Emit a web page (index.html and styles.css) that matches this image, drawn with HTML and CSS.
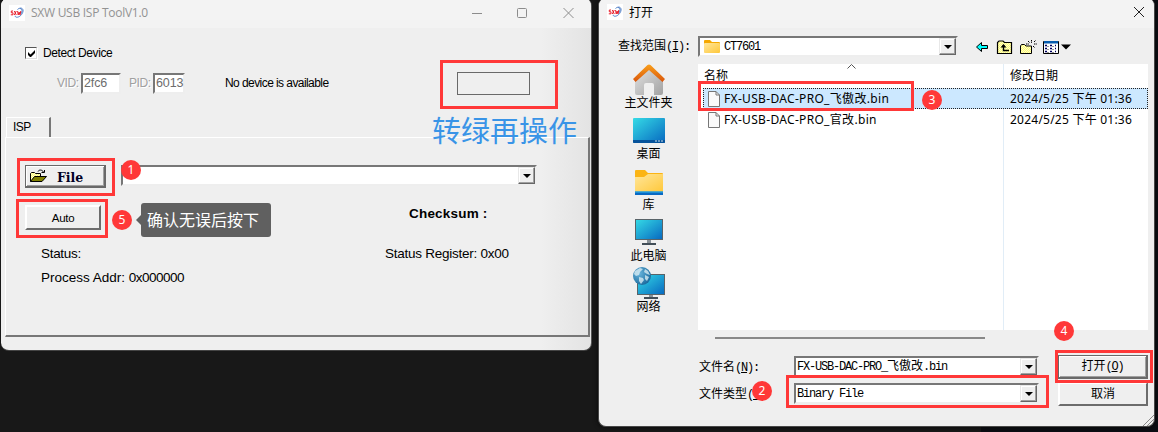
FILE: index.html
```html
<!DOCTYPE html>
<html lang="zh-CN">
<head>
<meta charset="utf-8">
<title>SXW USB ISP Tool</title>
<link rel="stylesheet" href="styles.css">
</head>
<body>
<svg class="defs" width="0" height="0">
  <defs>
    <pattern id="dither" width="2" height="2" patternUnits="userSpaceOnUse"><rect width="2" height="2" fill="#ffff70"/><path d="M0 0h1v1H0zM1 1h1v1H1z" fill="#fffbd0"/></pattern>
    <linearGradient id="screen" x1="0" y1="0" x2="1" y2="1"><stop offset="0" stop-color="#35dbe6"/><stop offset="1" stop-color="#0768c0"/></linearGradient>
    <linearGradient id="gold" x1="0" y1="0" x2="1" y2="1"><stop offset="0" stop-color="#ffe69b"/><stop offset="1" stop-color="#ffc83a"/></linearGradient>
    <linearGradient id="roof" x1="0" y1="0" x2="0" y2="1"><stop offset="0" stop-color="#f9a01b"/><stop offset="1" stop-color="#d9550b"/></linearGradient>
    <linearGradient id="wall" x1="0" y1="0" x2="1" y2="1"><stop offset="0" stop-color="#e2e2e2"/><stop offset="1" stop-color="#a2a2a2"/></linearGradient>
    <radialGradient id="globe" cx=".35" cy=".35" r=".7"><stop offset="0" stop-color="#69b5dc"/><stop offset="1" stop-color="#1b6a9d"/></radialGradient>
    <symbol id="logo" viewBox="0 0 16 16"><rect width="16" height="16" fill="#fff"/><path d="M8.500 4.500C10.500 2.600 13.500 2.500 14 5c.5 3-2.500 6.700-5.500 7.200-1.500.3-2.500-.4-2.200-1.400M11 3.500c2.500.5 2.500 3 .8 5.500" fill="none" stroke="#3c70c0" stroke-width=".9"/><path d="M4 6H2.300v1.800h1.700v2H1.800M5.300 6l2 4M7.300 6l-2 4M8.600 6l.6 4 .9-3 .9 3L11.800 6" fill="none" stroke="#e8202c"/></symbol>
    <symbol id="page" viewBox="0 0 12 16"><path d="M.5.500h7.500l3.500 3.500v11.500H.5z" fill="#fafafa" stroke="#777"/><path d="M8 .5V4h3.500" fill="none" stroke="#777"/></symbol>
  </defs>
</svg>
<main class="desktop">
  <section class="window tool">
    <header class="titlebar">
      <svg class="logo"><use href="#logo"/></svg>
      <span class="tool-title">SXW USB ISP ToolV1.0</span>
      <svg class="win-controls" width="102" height="12" viewBox="0 0 102 12" fill="none" stroke="#8c8c8c"><path d="M0 6.500h10"/><rect x="45.500" y="1.500" width="9" height="9" rx="1"/><path d="m91.500 1 10 10m0-10-10 10"/></svg>
    </header>
    <div class="detect"><span class="check"><svg width="9" height="9" viewBox="0 0 9 9"><path d="M1 3v3l2 2h1l4-4V1L3.500 5.500z"/></svg></span><span class="t-detect">Detect Device</span></div>
    <div class="device">
      <span class="dim t-vid">VID:</span><span class="sunken vid">2fc6</span><span class="dim t-pid">PID:</span><span class="sunken pid">6013</span>
      <span class="t-none">No device is available</span><span class="lamp"></span>
    </div>
    <div class="tabs"><span class="tab">ISP</span></div>
    <div class="panel">
      <div class="file-row">
        <div class="button default file-btn"><svg width="17" height="14" viewBox="0 0 17 14"><path d="M.5 12.500v-8l1-1h3l1 1h5v3" fill="url(#dither)" stroke="#000"/><path d="m.5 12.500 4-5h12l-4.500 5z" fill="#808000" stroke="#000"/><path d="M8 2.500c1-2 4-2 5.500.5m-2 .5h3V1" fill="none" stroke="#000"/></svg><b>File</b></div>
        <div class="combo path"><i class="drop"></i></div>
      </div>
      <div class="auto-row"><div class="button auto">Auto</div><b class="t-check">Checksum :</b></div>
      <div class="status-row"><span class="t-status">Status:</span><span class="t-reg">Status Register: 0x00</span></div>
      <div class="addr-row"><span class="t-addr">Process Addr: <span class="hex">0x000000</span></span></div>
    </div>
  </section>

  <section class="window dialog">
    <header class="titlebar">
      <svg class="logo"><use href="#logo"/></svg><span class="dlg-title">打开</span>
      <svg class="dlg-close" width="12" height="12" viewBox="0 0 12 12"><path d="m1 1 10 10m0-10L1 11" stroke="#222" fill="none"/></svg>
    </header>
    <div class="lookin">
      <span class="lookin-label">查找范围<span class="mono">(<u>I</u>):</span></span>
      <div class="combo folder-combo"><svg width="16" height="13" viewBox="0 0 16 13"><path d="M0 1q0-1 1-1h5l2 2h7q1 0 1 1v3H0z" fill="#f5a800"/><rect y="3" width="16" height="10" rx="1" fill="url(#gold)"/></svg><span class="mono">CT7601</span><i class="drop"></i></div>
      <svg class="tools" width="96" height="18" viewBox="0 0 96 18">
        <path d="m.5 9 5-4.500v3h6v3h-6v3z" fill="#0ff" stroke="#000"/>
        <path d="M21.500 15.500v-11l1.500-1.500h4l1.500 1.500h7v11z" fill="url(#dither)" stroke="#000" stroke-width="1.200"/><path d="M27.500 7v5.500H33" stroke="#000" fill="none" stroke-width="1.400"/><path d="m24.500 9.500 3-3.500 3 3.500z"/>
        <path d="M44.500 15.500V8l1-1.500h3L50 8h5.500v7.500z" fill="url(#dither)" stroke="#000"/><path d="M55.500 2v3m0 3v3M50 6h3m5 0h3m-9-3 2 2m3 3 2 2m-1-6 2-2" stroke="#000" stroke-dasharray="1.500 .7" fill="none"/>
        <path d="M67.500 3.500h15v12h-15z" fill="#fff" stroke="#000"/><path d="M68 3h14v2.500H68z" fill="#075cae"/><path d="M69 7.500h2m3 0h2m3 0h1m-11 3h2m3 0h2m3 0h1m-11 3h2m3 0h2m3 0h1" stroke="#000060" stroke-width="1.500"/><path d="M71 8.500h2m3 0h2m-7 3h2m3 0h2m-7 3h2m3 0h2" stroke="#999"/>
        <path d="M85 6.500h10l-5 5z"/>
      </svg>
    </div>
    <div class="dialog-body">
      <nav class="places">
        <div class="place p1"><svg width="32" height="31" viewBox="0 0 32 31"><path d="M2 16 16 4l14 12v13q0 2-2 2h-7V21q0-2-2-2h-6q-2 0-2 2v10H4q-2 0-2-2z" fill="url(#wall)"/><path d="M0 15 14.500 1q1.500-1.200 3 0L32 15l-2.500 3L16 6 2.500 18z" fill="url(#roof)"/></svg><span>主文件夹</span></div>
        <div class="place p2"><svg width="32" height="25" viewBox="0 0 32 25"><rect width="32" height="25" rx="1" fill="url(#screen)"/><path d="M0 22h32v2q0 1-1 1H1q-1 0-1-1z" fill="#07539b"/><path d="M22 23h2m1 0h2m1 0h2" stroke="#cce2ed"/></svg><span>桌面</span></div>
        <div class="place p3"><svg width="28" height="25" viewBox="0 0 28 25"><path d="M0 1q0-1 1-1h9l3 3h14q1 0 1 1v6H0z" fill="#fbb414"/><path d="M0 7h9l4-3h15v18H0z" fill="url(#gold)"/><path d="M0 21.500h28V25H0z" fill="#0869c3"/><path d="M0 22h28" stroke="#31b7ee"/></svg><span>库</span></div>
        <div class="place p4"><svg width="28" height="26" viewBox="0 0 28 26"><path d="M12 20h4v5h-4z" fill="#8a9298"/><path d="M7 24h14v2H7z" fill="#414d57"/><rect x=".5" y=".5" width="27" height="20" fill="url(#screen)" stroke="#596368"/></svg><span>此电脑</span></div>
        <div class="place p5"><svg width="32" height="32" viewBox="0 0 32 32"><path d="M16 27h4v4h-4z" fill="#8a9298"/><path d="M11 30h14v2H11z" fill="#414d57"/><rect x="4.500" y="7.500" width="27" height="20" fill="url(#screen)" stroke="#596368"/><circle cx="9" cy="9" r="9" fill="url(#globe)"/><path d="m2 4 5-3 3 1-3 3-1 3-3 1-2-2zM12 2l3 2 2 4-3-1-3-2zM6 10l4 1 1 2-3 4-2-3zM12 8l4 2-2 4-2-2z" fill="#d7ebf2" opacity=".8"/></svg><span>网络</span></div>
      </nav>
      <div class="files">
        <div class="list-head"><span>名称</span><svg width="9" height="5" viewBox="0 0 9 5"><path d="m.5 4.500 4-4 4 4" fill="none" stroke="#555"/></svg><span class="date-head">修改日期</span></div>
        <div class="entry selected"><svg class="page"><use href="#page"/></svg><span class="name">FX-USB-DAC-PRO_飞傲改.bin</span><span class="date">2024/5/25 下午 01:36</span></div>
        <div class="entry"><svg class="page"><use href="#page"/></svg><span class="name">FX-USB-DAC-PRO_官改.bin</span><span class="date">2024/5/25 下午 01:36</span></div>
        <div class="list-rest"></div>
      </div>
    </div>
    <div class="scrollbar"></div>
    <div class="form">
      <span class="form-label">文件名<span class="mono">(<u>N</u>):</span></span><div class="combo field"><span class="mono">FX-USB-DAC-PRO_<span class="han">飞傲改</span>.bin</span><i class="drop"></i></div><div class="button default open"><span>打开<span class="mono">(<u>O</u>)</span></span></div>
      <span class="form-label">文件类型<span class="mono">(<u>T</u></span></span><div class="combo field type"><span class="mono">Binary File</span><i class="drop"></i></div><div class="button cancel">取消</div>
    </div>
    <svg class="grip" width="11" height="11" viewBox="0 0 11 11" stroke="#888" fill="none"><path d="M0 11 11 0M4 11l7-7M8 11l3-3"/></svg>
  </section>

  <div class="mark m-lamp"></div><div class="mark m-file"></div><div class="mark m-auto"></div>
  <div class="mark m-name"></div><div class="mark m-type"></div><div class="mark m-open"></div>
  <span class="num n1">1</span><span class="num n2">2</span><span class="num n3">3</span><span class="num n4">4</span><span class="num n5">5</span>
  <span class="note">转绿再操作</span><span class="tip">确认无误后按下</span>
</main>
</body>
</html>
```

FILE: styles.css
```css
* { box-sizing: border-box; }
body { margin: 0; font: 12px/14px "Liberation Sans", "Noto Sans CJK SC", sans-serif; color: #000; }
.defs { position: absolute; }
.desktop { position: relative; width: 1158px; height: 432px; overflow: hidden; background: linear-gradient(90deg, #181818 981px, #0b0d13 981px); white-space: nowrap; }
.window { position: absolute; background: #efefef; overflow: hidden; border-radius: 8px; }
.tool { left: 1px; top: -2px; width: 591px; height: 353px; padding-top: 2px; border-right: 1px solid #555; border-bottom: 1px solid #444; background: linear-gradient(90deg, #efefef 540px, #e3e3e3); }
.dialog { left: 598px; top: -2px; width: 557px; height: 429px; padding-top: 2px; border: 1px solid #484848; border-top: 0; box-shadow: 0 0 5px #080808; }
.titlebar { display: flex; align-items: center; height: 28px; padding: 0 17px 2px 8px; background: #f3f3f3; }
.logo { width: 16px; height: 16px; }
.tool-title { margin-left: 6px; font: 12px/16px "Open Sans", sans-serif; letter-spacing: -.27px; color: #929292; }
.win-controls { margin-left: auto; }

.detect { display: flex; align-items: center; margin: 18px 0 0 24px; height: 14px; }
.check { display: grid; place-items: center; width: 12px; height: 12px; background: #fff; border: 1px solid; border-color: #555 #ddd #ddd #555; box-shadow: 1px 1px #fff; }
.t-detect { margin-left: 6px; letter-spacing: -.42px; }
.device { display: flex; align-items: center; height: 24px; margin: 11px 0 0 56px; }
.dim { color: #a0a0a0; text-shadow: 1px 1px #fff; letter-spacing: -.4px; }
.t-vid { width: 24px; }
.t-pid { width: 24px; margin-left: 8px; }
.sunken { height: 21px; padding: 1px 1px; font-size: 12.500px; line-height: 15px; color: #6d6d6d; background: #fff; border: 2px solid; border-color: #777 #eee #eee #777; letter-spacing: -.1px; }
.vid { width: 40px; }
.pid { width: 32px; }
.t-none { width: 104px; margin-left: 40px; letter-spacing: -.57px; }
.lamp { width: 73px; height: 23px; margin-left: 128px; border: 1px solid #696969; }

.tabs { display: flex; height: 20px; margin: 22px 0 0 5px; }
.tab { width: 45px; height: 20px; padding: 2px 6px; border: 1px solid #fff; border-right: 2px solid #777; border-bottom: 0; letter-spacing: -.5px; }
.panel { height: 200px; margin: 0 1px 0 4px; border: 1px solid #fff; border-right: 2px solid #777; border-bottom: 2px solid #777; }
.button { display: flex; align-items: center; justify-content: center; background: #efefef; border: 2px solid; border-color: #fff #6c6c6c #6c6c6c #fff; }
.button.default { border: 1px solid #696969; border-width: 1px 2px 2px 1px; box-shadow: inset 1px 1px #fff, inset -1px -1px #a0a0a0; }
.file-row { display: flex; align-items: flex-start; margin: 27px 0 0 19px; }
.file-btn { width: 81px; height: 23px; justify-content: flex-start; padding-left: 4px; }
.file-btn b { margin-left: 10px; padding-top: 3px; font: bold 12.500px/16px "DejaVu Serif", serif; color: #000025; }
.combo { display: flex; align-items: center; height: 21px; background: #fff; border: 2px solid; border-color: #777 #eee #eee #777; }
.path { width: 416px; margin-left: 15px; }
.drop { display: grid; place-items: center; flex: none; width: 17px; height: 17px; margin-left: auto; background: #efefef; border: 1px solid; border-color: #e8e8e8 #666 #666 #e8e8e8; box-shadow: inset -1px -1px #a0a0a0, inset 1px 1px #fff; }
.drop::after { content: ""; border: 4px solid transparent; border-top-color: #000; border-bottom: 0; }
.auto-row { display: flex; align-items: center; height: 25px; margin: 17px 0 0 19px; }
.auto { width: 76px; height: 25px; font-size: 11.500px; letter-spacing: -.3px; }
.t-check { margin: -8px 0 0 308px; font-size: 13.500px; letter-spacing: .2px; }
.status-row { display: flex; height: 16px; margin: 16px 0 0 35px; font-size: 13.500px; line-height: 16px; }
.t-status { width: 344px; letter-spacing: -.3px; }
.t-reg { letter-spacing: -.25px; }
.addr-row { height: 16px; margin: 8px 0 0 35px; font-size: 13.500px; line-height: 16px; letter-spacing: 0; }
.hex { letter-spacing: -.5px; }

.dialog .titlebar { padding: 0 9px 4px 8px; }
.dlg-title { margin-left: 6px; font: 12px/16px "Noto Sans CJK SC", sans-serif; }
.dlg-close { margin-left: auto; }
.mono { font: 12px/14px "Liberation Mono", "Noto Sans CJK SC", monospace; letter-spacing: -1.200px; }
.han { letter-spacing: 0; }
.lookin { display: flex; align-items: center; height: 21px; margin: 8px 0 0 19px; }
.lookin-label { width: 80px; }
.folder-combo { width: 260px; padding-left: 4px; }
.folder-combo .mono { margin-left: 4px; }
.tools { margin-left: 18px; }
.dialog-body { display: grid; grid-template-columns: 99px 450px; height: 266px; margin-top: 7px; }
.places { display: flex; flex-direction: column; }
.place { display: flex; flex-direction: column; align-items: center; justify-content: space-between; line-height: 14px; }
.p1 { height: 46px; }
.p2 { height: 43px; margin-top: 8px; }
.p3 { height: 42px; margin-top: 9px; }
.p4 { height: 44px; margin-top: 7px; }
.p5 { height: 47px; margin-top: 4px; }
.files { display: flex; flex-direction: column; background: linear-gradient(90deg, #fff 305px, #e1edf7 305px 306px, #fff 306px); font: 12px/20px "Noto Sans", "Noto Sans CJK SC", sans-serif; }
.list-head { display: grid; grid-template-columns: 143px 162px auto; height: 24px; padding-left: 6px; }
.list-head span { padding-top: 2px; }
.list-head .date-head { padding-left: 1px; }
.entry { display: grid; grid-template-columns: 15px 286px auto; align-items: center; height: 21px; margin-left: 5px; padding-left: 5px; }
.selected { background: #cce8ff; outline: 1px dotted #222; outline-offset: -1px; }
.page { width: 12px; height: 16px; }
.name { padding-left: 1px; letter-spacing: .32px; }
.date { padding-left: 1px; letter-spacing: .23px; }
.scrollbar { width: 270px; height: 2px; margin: 7px 0 0 116px; background: #888; }
.form { display: grid; grid-template-columns: 95px 245px 90px; grid-template-rows: 27px 27px; margin: 16px 0 0 100px; }
.form-label { padding-top: 5px; }
.field { width: 245px; height: 21px; margin-top: 1px; padding-left: 1px; }
.open, .cancel { width: 90px; height: 24px; margin-left: 19px; }
.grip { position: absolute; right: 0; bottom: 0; }

.mark { position: absolute; border: 3px solid #ff3838; }
.m-lamp { left: 440px; top: 60px; width: 118px; height: 49px; }
.m-file { left: 17px; top: 158px; width: 98px; height: 38px; }
.m-auto { left: 16px; top: 199px; width: 92px; height: 39px; }
.m-name { left: 698px; top: 81px; width: 216px; height: 30px; }
.m-type { left: 786px; top: 375px; width: 263px; height: 33px; }
.m-open { left: 1055px; top: 350px; width: 98px; height: 33px; }
.num { position: absolute; width: 20px; height: 20px; border-radius: 50%; background: #ff3838; color: #fff; text-align: center; font: 12px/20px "Noto Sans", sans-serif; }
.n1 { left: 121px; top: 160px; }
.n2 { left: 752px; top: 381px; }
.n3 { left: 922px; top: 90px; }
.n4 { left: 1054px; top: 321px; }
.n5 { left: 112px; top: 210px; }
.note { position: absolute; left: 432px; top: 111px; font: 29px/36px "Noto Sans CJK SC", sans-serif; color: #3994e7; }
.tip { position: absolute; left: 141px; top: 203px; width: 130px; height: 34px; padding-left: 6px; border-radius: 3px; background: #606060; color: #fff; font: 16px/33px "Noto Sans CJK SC", sans-serif; }
.tip::before { content: ""; position: absolute; left: -5px; top: 12px; border: 5px solid transparent; border-right-color: #606060; border-left: 0; }
```
